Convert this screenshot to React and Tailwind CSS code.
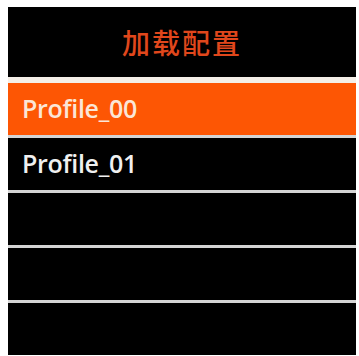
export default function App() {
  const rows = ["Profile_00", "Profile_01", "", "", ""];
  return (
    <div className="w-[359px] h-[356px] bg-white overflow-hidden pl-[8px] pr-[3px] pt-[7px]">
      <div className="h-[70px] bg-black flex items-center justify-center">
        <span
          className="text-[28px] font-medium text-[#e0471c] tracking-[2px]"
          style={{ fontFamily: '"Noto Sans CJK SC", sans-serif' }}
        >
          加载配置
        </span>
      </div>
      <div className="h-[6px] bg-[#f4efe8]" />
      <div className="flex flex-col gap-[3px] bg-[#d4d4d4]">
        {rows.map((r, i) => (
          <div
            key={i}
            className={
              "h-[52px] flex items-center pl-[14px] text-[25px] font-semibold tracking-[-0.3px] " +
              (i === 0 ? "bg-[#fd5604] text-[#fbe6d6]" : "bg-black text-[#f0f0f0]")
            }
            style={{ fontFamily: '"Open Sans", sans-serif' }}
          >
            {r}
          </div>
        ))}
      </div>
    </div>
  );
}
